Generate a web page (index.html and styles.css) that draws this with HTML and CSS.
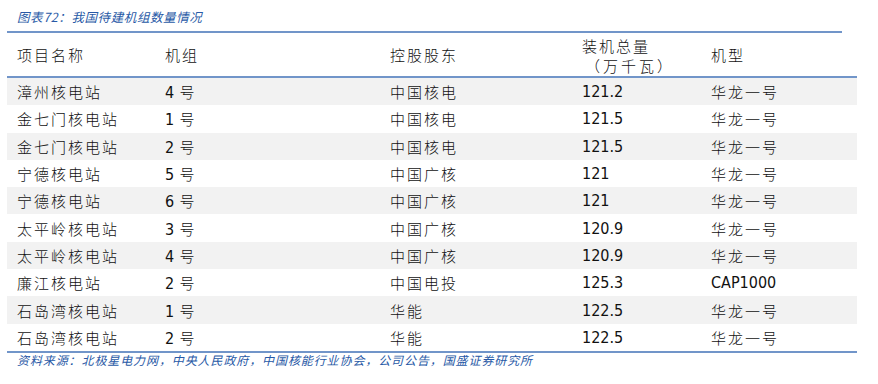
FILE: index.html
```html
<!DOCTYPE html>
<html lang="zh-CN">

<head>
  <meta charset="UTF-8">
  <title>图表72：我国待建机组数量情况</title>
  <link rel="stylesheet" href="styles.css">
</head>

<body>
  <div class="page">
    <div class="titulo">图表72：我国待建机组数量情况</div>
    <div class="regua"></div>

    <div class="tabela">
      <div class="linha cabecalho">
        <div>项目名称</div>
        <div>机组</div>
        <div>控股股东</div>
        <div class="duas">装机总量<br><span class="unidade">（万千瓦）</span></div>
        <div>机型</div>
      </div>

      <div class="linha cinza">
        <div>漳州核电站</div><div><span class="num">4</span> 号</div><div>中国核电</div><div class="num">121.2</div><div>华龙一号</div>
      </div>
      <div class="linha">
        <div>金七门核电站</div><div><span class="num">1</span> 号</div><div>中国核电</div><div class="num">121.5</div><div>华龙一号</div>
      </div>
      <div class="linha cinza">
        <div>金七门核电站</div><div><span class="num">2</span> 号</div><div>中国核电</div><div class="num">121.5</div><div>华龙一号</div>
      </div>
      <div class="linha">
        <div>宁德核电站</div><div><span class="num">5</span> 号</div><div>中国广核</div><div class="num">121</div><div>华龙一号</div>
      </div>
      <div class="linha cinza">
        <div>宁德核电站</div><div><span class="num">6</span> 号</div><div>中国广核</div><div class="num">121</div><div>华龙一号</div>
      </div>
      <div class="linha">
        <div>太平岭核电站</div><div><span class="num">3</span> 号</div><div>中国广核</div><div class="num">120.9</div><div>华龙一号</div>
      </div>
      <div class="linha cinza">
        <div>太平岭核电站</div><div><span class="num">4</span> 号</div><div>中国广核</div><div class="num">120.9</div><div>华龙一号</div>
      </div>
      <div class="linha">
        <div>廉江核电站</div><div><span class="num">2</span> 号</div><div>中国电投</div><div class="num">125.3</div><div class="num">CAP1000</div>
      </div>
      <div class="linha cinza">
        <div>石岛湾核电站</div><div><span class="num">1</span> 号</div><div>华能</div><div class="num">122.5</div><div>华龙一号</div>
      </div>
      <div class="linha">
        <div>石岛湾核电站</div><div><span class="num">2</span> 号</div><div>华能</div><div class="num">122.5</div><div>华龙一号</div>
      </div>
    </div>

    <div class="fonte">资料来源：北极星电力网，中央人民政府，中国核能行业协会，公司公告，国盛证券研究所</div>
  </div>
</body>

</html>
```

FILE: styles.css
```css
* {
  box-sizing: border-box;
}
body {
  margin: 0;
  padding: 0;
  background-color: #ffffff;
  font-family: "Noto Sans CJK SC", sans-serif;
  color: #111;
}
.page {
  width: 857px;
  padding-left: 7px;
}
.titulo {
  height: 31px;
  padding: 5px 0 0 10px;
  line-height: 24px;
  font-size: 12.5px;
  font-style: italic;
  letter-spacing: 0.6px;
  color: #2859a6;
}
.regua {
  width: 835px;
  height: 2px;
  background-color: #7195c9;
}
.linha {
  display: grid;
  grid-template-columns: 148px 225px 192px 129px 156px;
  height: 27.3px;
  align-items: center;
  font-size: 15px;
  font-weight: 300;
  letter-spacing: 2px;
}
.linha div {
  padding-left: 10px;
  white-space: nowrap;
}
.cinza {
  background-color: #f2f2f2;
}
.cabecalho {
  height: 45px;
  border-bottom: 2px solid #7195c9;
}
.duas {
  line-height: 20px;
  padding-top: 2px;
}
.unidade {
  letter-spacing: 3px;
  margin-left: 3px;
}
.num {
  font-family: "DejaVu Sans Condensed", "DejaVu Sans", sans-serif;
  font-size: 16px;
  font-weight: normal;
  letter-spacing: 0;
}
.tabela {
  border-bottom: 2px solid #7195c9;
}
.fonte {
  padding-left: 10px;
  line-height: 14px;
  font-size: 12px;
  font-style: italic;
  letter-spacing: 0.9px;
  color: #2859a6;
}
```
